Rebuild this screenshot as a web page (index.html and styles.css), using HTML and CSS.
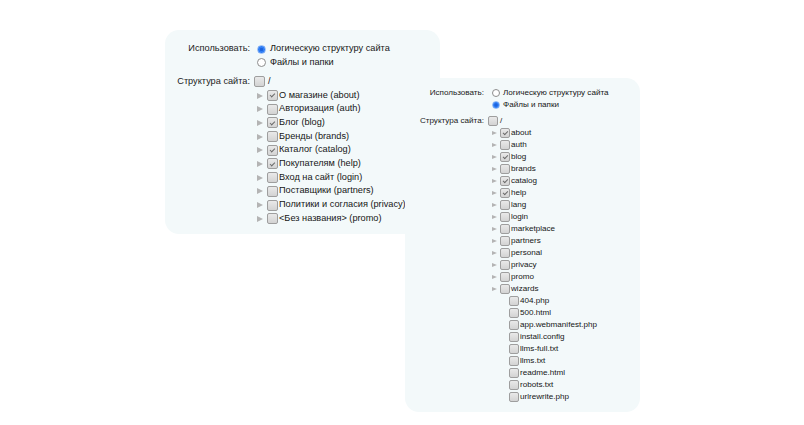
FILE: index.html
```html
<!DOCTYPE html>
<html lang="ru">
<head>
<meta charset="utf-8">
<title>Структура сайта</title>
<link rel="stylesheet" href="styles.css">
</head>
<body>
<div class="desk">
  <section class="panel p1">
    <div class="field">
      <div class="lbl">Использовать:</div>
      <div class="ctl">
        <div class="row"><span class="radio on"></span>Логическую структуру сайта</div>
        <div class="row"><span class="radio"></span>Файлы и папки</div>
      </div>
    </div>
    <div class="field tree">
      <div class="lbl">Структура сайта:</div>
      <div class="ctl">
        <div class="row"><span class="cb root"></span>/</div>
        <div class="kids">
          <div class="row"><span class="arr"></span><span class="cb on"></span>О магазине (about)</div>
          <div class="row"><span class="arr"></span><span class="cb"></span>Авторизация (auth)</div>
          <div class="row"><span class="arr"></span><span class="cb on"></span>Блог (blog)</div>
          <div class="row"><span class="arr"></span><span class="cb"></span>Бренды (brands)</div>
          <div class="row"><span class="arr"></span><span class="cb on"></span>Каталог (catalog)</div>
          <div class="row"><span class="arr"></span><span class="cb on"></span>Покупателям (help)</div>
          <div class="row"><span class="arr"></span><span class="cb"></span>Вход на сайт (login)</div>
          <div class="row"><span class="arr"></span><span class="cb"></span>Поставщики (partners)</div>
          <div class="row"><span class="arr"></span><span class="cb"></span>Политики и согласия (privacy)</div>
          <div class="row"><span class="arr"></span><span class="cb"></span>&lt;Без названия&gt; (promo)</div>
        </div>
      </div>
    </div>
  </section>

  <section class="panel p2">
    <div class="field">
      <div class="lbl">Использовать:</div>
      <div class="ctl">
        <div class="row"><span class="radio"></span>Логическую структуру сайта</div>
        <div class="row"><span class="radio on"></span>Файлы и папки</div>
      </div>
    </div>
    <div class="field tree">
      <div class="lbl">Структура сайта:</div>
      <div class="ctl">
        <div class="row"><span class="cb root"></span>/</div>
        <div class="kids">
          <div class="row"><span class="arr"></span><span class="cb on"></span>about</div>
          <div class="row"><span class="arr"></span><span class="cb"></span>auth</div>
          <div class="row"><span class="arr"></span><span class="cb on"></span>blog</div>
          <div class="row"><span class="arr"></span><span class="cb"></span>brands</div>
          <div class="row"><span class="arr"></span><span class="cb on"></span>catalog</div>
          <div class="row"><span class="arr"></span><span class="cb on"></span>help</div>
          <div class="row"><span class="arr"></span><span class="cb"></span>lang</div>
          <div class="row"><span class="arr"></span><span class="cb"></span>login</div>
          <div class="row"><span class="arr"></span><span class="cb"></span>marketplace</div>
          <div class="row"><span class="arr"></span><span class="cb"></span>partners</div>
          <div class="row"><span class="arr"></span><span class="cb"></span>personal</div>
          <div class="row"><span class="arr"></span><span class="cb"></span>privacy</div>
          <div class="row"><span class="arr"></span><span class="cb"></span>promo</div>
          <div class="row"><span class="arr"></span><span class="cb"></span>wizards</div>
          <div class="row file"><span class="cb"></span>404.php</div>
          <div class="row file"><span class="cb"></span>500.html</div>
          <div class="row file"><span class="cb"></span>app.webmanifest.php</div>
          <div class="row file"><span class="cb"></span>install.config</div>
          <div class="row file"><span class="cb"></span>llms-full.txt</div>
          <div class="row file"><span class="cb"></span>llms.txt</div>
          <div class="row file"><span class="cb"></span>readme.html</div>
          <div class="row file"><span class="cb"></span>robots.txt</div>
          <div class="row file"><span class="cb"></span>urlrewrite.php</div>
        </div>
      </div>
    </div>
  </section>
</div>
</body>
</html>
```

FILE: styles.css
```css
* { box-sizing: border-box; }
html, body { margin: 0; padding: 0; background: #ffffff; }
body {
  font-family: "Liberation Sans", Arial, Helvetica, sans-serif;
  color: #161616;
}
.desk {
  position: relative;
  width: 804px;
  height: 425px;
  overflow: hidden;
}
.panel {
  position: absolute;
  background: #f3f9fa;
  border-radius: 14px;
}
.p1 {
  left: 165px; top: 30px; width: 275px; height: 204px;
  font-size: 9.2px;
  padding-top: 12.3px;
  --lblw: 85px;
  --lh: 13.7px;
  --gap: 5.3px;
  --rsz: 9px; --rml: 7px; --rmr: 4px;
  --csz: 11px; --cml: 4px; --cmr: 3px;
  --kpl: 7px; --asz: 6px; --amr: 4px; --kcmr: 1px;
  --fpl: 9px;
}
.p2 {
  left: 405px; top: 78px; width: 235px; height: 334px;
  font-size: 8.1px;
  padding-top: 8.5px;
  --lblw: 79px;
  --lh: 12px;
  --gap: 4.5px;
  --rsz: 8px; --rml: 8px; --rmr: 3px;
  --csz: 10px; --cml: 4px; --cmr: 2px;
  --kpl: 8px; --asz: 5px; --amr: 3px; --kcmr: 1px;
  --fpl: 9px;
}
.field {
  display: flex;
  align-items: flex-start;
}
.tree { margin-top: var(--gap); }
.lbl {
  width: var(--lblw);
  flex: none;
  text-align: right;
  line-height: var(--lh);
  color: #222;
  white-space: nowrap;
}
.ctl { display: flex; flex-direction: column; }
.row {
  display: flex;
  align-items: center;
  height: var(--lh);
  line-height: var(--lh);
  white-space: nowrap;
}
.radio {
  flex: none;
  width: var(--rsz);
  height: var(--rsz);
  margin-left: var(--rml);
  margin-right: var(--rmr);
  border-radius: 50%;
  border: 1px solid #8d8d8d;
  background: #ffffff;
}
.radio.on {
  border: 1px solid #8fb8f4;
  background: radial-gradient(circle, #1c63dc 0 1.3px, #2f7ef6 2px);
}
.cb {
  flex: none;
  position: relative;
  width: var(--csz);
  height: var(--csz);
  border: 1px solid #9e9e9e;
  border-radius: 2px;
  background: linear-gradient(#e9e9e9, #d3d3d3);
  margin-right: var(--kcmr);
}
.cb.root {
  margin-left: var(--cml);
  margin-right: var(--cmr);
}
.cb.on::after {
  content: "";
  position: absolute;
  left: 22%;
  top: 24%;
  width: 48%;
  height: 26%;
  border-left: 1.2px solid #6b6b6b;
  border-bottom: 1.2px solid #6b6b6b;
  transform: rotate(-45deg);
}
.kids {
  display: flex;
  flex-direction: column;
  padding-left: var(--kpl);
}
.arr {
  flex: none;
  box-sizing: content-box;
  width: 0;
  height: 0;
  margin-right: var(--amr);
  border-left: var(--asz) solid #b4b4b4;
  border-top: calc(var(--asz) * 0.55) solid transparent;
  border-bottom: calc(var(--asz) * 0.55) solid transparent;
}
.row.file {
  padding-left: calc(var(--asz) + var(--amr) + var(--fpl));
}
```
